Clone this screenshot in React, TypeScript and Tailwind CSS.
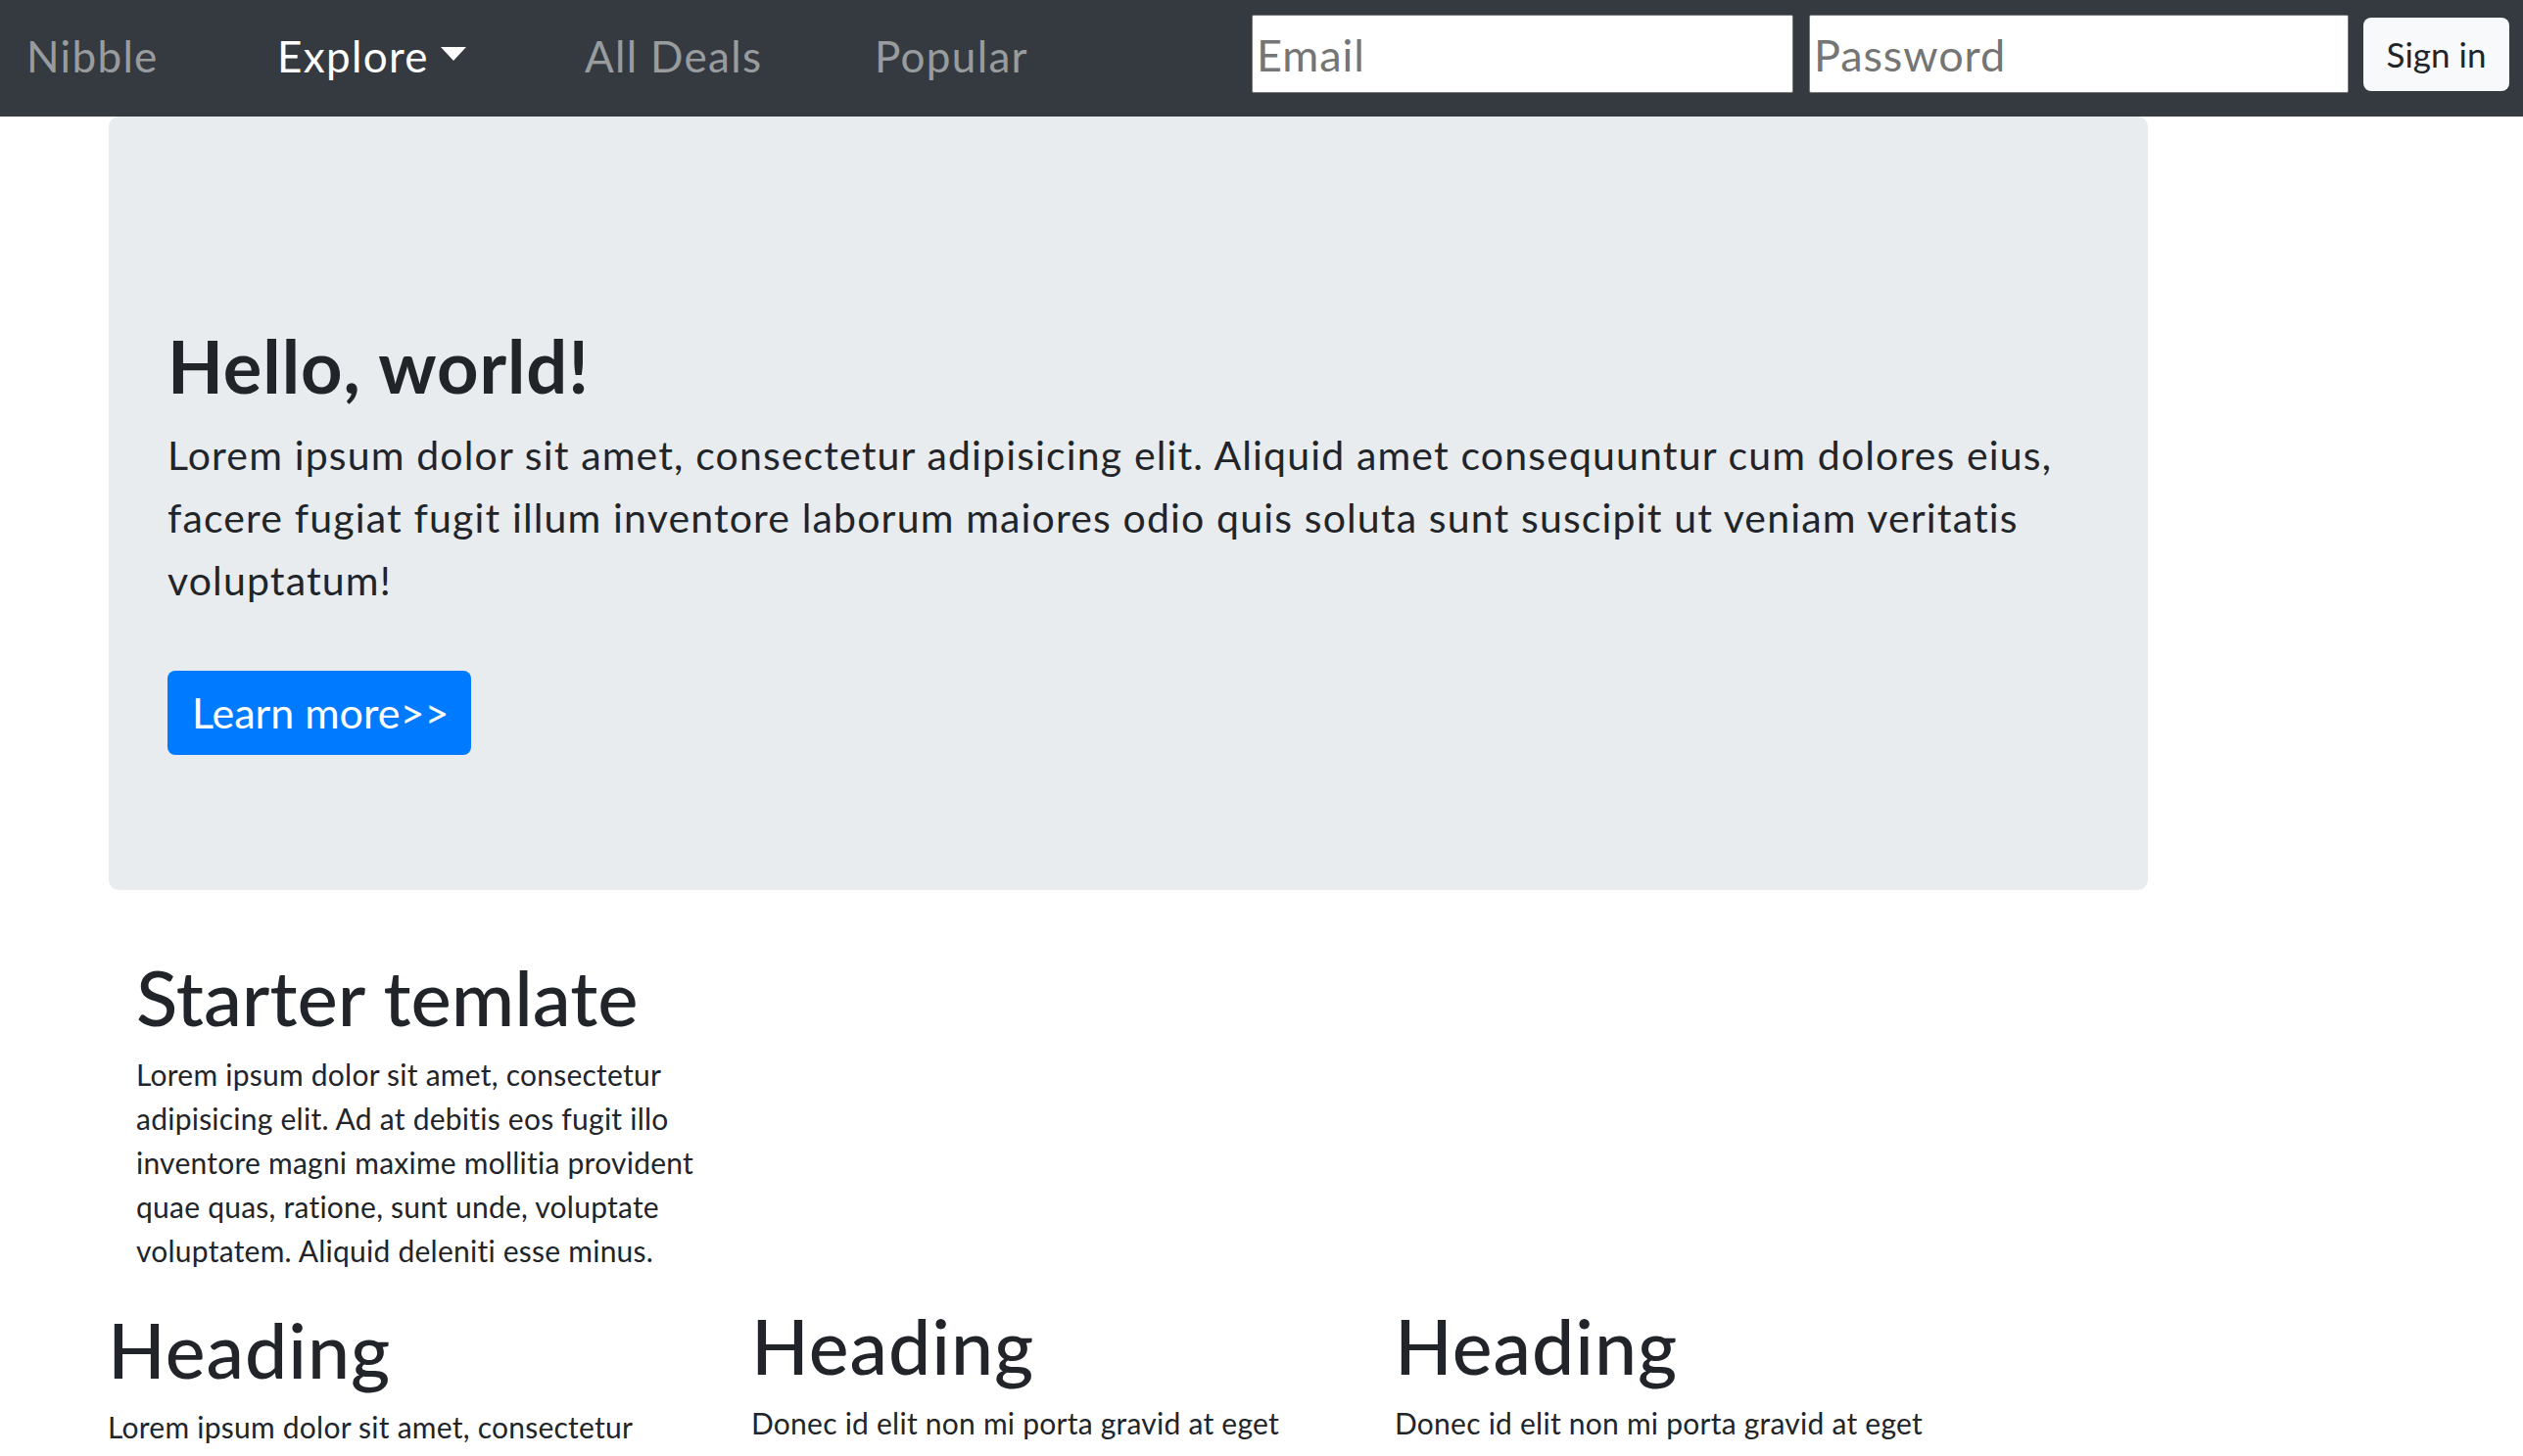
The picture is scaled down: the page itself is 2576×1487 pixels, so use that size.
export default function App() {
  return (
    <div className="min-h-screen bg-white font-['Lato','Segoe_UI',sans-serif] text-[#212529]">
      <nav className="flex h-[119px] items-center bg-[#343a40]">
        <div className="mb-[6px] ml-[27px] flex items-center text-[44px] leading-none tracking-[0.03em]">
          <a href="#" className="w-[256px] text-white/50">
            Nibble
          </a>
          <a href="#" className="w-[314px] text-white">
            Explore
            <span className="ml-[12px] inline-block border-x-[13.5px] border-t-[14px] border-x-transparent border-t-white align-[0.255em]" />
          </a>
          <a href="#" className="w-[296px] text-white/50">
            All Deals
          </a>
          <a href="#" className="text-white/50">
            Popular
          </a>
        </div>
        <form className="mb-[9px] ml-auto mr-[14px] flex items-center">
          <input
            type="email"
            placeholder="Email"
            className="h-[80px] w-[553px] rounded-[2px] border border-[#767676] bg-white px-[4px] pt-[2px] text-[45px] tracking-[0.02em] text-[#212529] placeholder:text-[#757575] outline-none"
          />
          <input
            type="password"
            placeholder="Password"
            className="ml-[16px] h-[80px] w-[551px] rounded-[2px] border border-[#767676] bg-white px-[4px] pt-[2px] text-[45px] tracking-[0.02em] text-[#212529] placeholder:text-[#757575] outline-none"
          />
          <button
            type="button"
            className="ml-[15px] flex h-[75px] w-[149px] items-center justify-center rounded-[8px] bg-[#f8f9fa] text-[35px] text-[#212529]"
          >
            Sign in
          </button>
        </form>
      </nav>

      <main>
        <section className="ml-[111px] h-[790px] w-[2082px] rounded-[10px] bg-[#e9ecef] pl-[60px] pr-[56px] pt-[218px]">
          <h1 className="text-[74px] font-bold leading-none tracking-[0.013em]">Hello, world!</h1>
          <p className="mt-[22px] w-[1962px] text-[41px] leading-[64px] tracking-[0.028em]">
            Lorem ipsum dolor sit amet, consectetur adipisicing elit. Aliquid amet consequuntur cum dolores eius,
            facere fugiat fugit illum inventore laborum maiores odio quis soluta sunt suscipit ut veniam veritatis
            voluptatum!
          </p>
          <a
            href="#"
            className="mt-[60px] flex h-[86px] w-[310px] items-center rounded-[8px] bg-[#007bff] pl-[25px] text-[43px] text-white"
          >
            Learn more&gt;&gt;
          </a>
        </section>

        <section className="ml-[139px] mt-[70px] w-[600px]">
          <h2 className="text-[78px] font-medium leading-none">Starter temlate</h2>
          <p className="mt-[18px] text-[30px] leading-[45px] tracking-[0.008em]">
            Lorem ipsum dolor sit amet, consectetur adipisicing elit. Ad at debitis eos fugit illo inventore magni
            maxime mollitia provident quae quas, ratione, sunt unde, voluptate voluptatem. Aliquid deleniti esse
            minus.
          </p>
        </section>

        <div className="ml-[110px] mt-[36px] grid grid-cols-[657px_657px_657px] pb-[40px]">
          <div className="w-[600px] pt-[4px]">
            <h2 className="text-[77px] font-medium leading-none tracking-[0.013em]">Heading</h2>
            <p className="mt-[18px] text-[30px] leading-[45px] tracking-[0.008em]">
              Lorem ipsum dolor sit amet, consectetur adipisicing elit. Quam, voluptatibus facere.
            </p>
          </div>
          <div className="w-[600px]">
            <h2 className="text-[77px] font-medium leading-none tracking-[0.013em]">Heading</h2>
            <p className="mt-[18px] text-[30px] leading-[45px] tracking-[0.008em]">
              Donec id elit non mi porta gravid at eget metus. Fusce dapibus, tellus ac cursus commodo.
            </p>
          </div>
          <div className="w-[600px]">
            <h2 className="text-[77px] font-medium leading-none tracking-[0.013em]">Heading</h2>
            <p className="mt-[18px] text-[30px] leading-[45px] tracking-[0.008em]">
              Donec id elit non mi porta gravid at eget metus. Fusce dapibus, tellus ac cursus commodo.
            </p>
          </div>
        </div>
      </main>
    </div>
  );
}
